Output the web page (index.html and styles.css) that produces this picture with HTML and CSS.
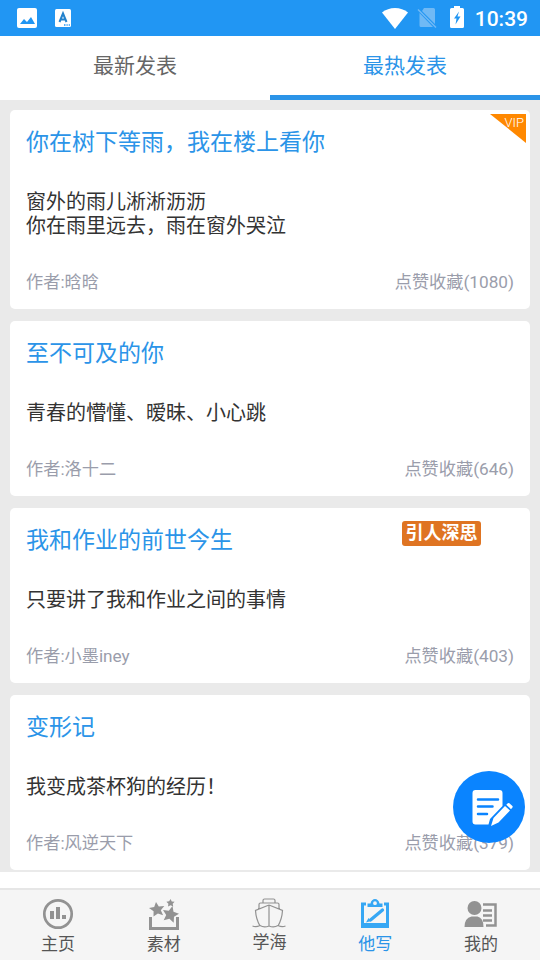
FILE: index.html
```
<!DOCTYPE html>
<html lang="zh-CN">
<head>
<meta charset="utf-8">
<title>最热发表</title>
<link rel="stylesheet" href="styles.css">
</head>
<body>
<header class="status">
  <div class="status-left">
    <svg width="20" height="20" viewBox="0 0 20 20"><rect width="20" height="20" rx="2" fill="#fff"/><path d="M3 16l4-5 3 3 4-5 4 7z" fill="#2196f3"/></svg>
    <svg width="16" height="18" viewBox="0 0 16 18"><rect width="16" height="18" rx="1.5" fill="#fff"/><path d="M4.5 13L8 4.5l3.500 8.500M5.700 10.500h4.600" fill="none" stroke="#2482cc" stroke-width="2"/><path d="M9 16h1.500m1 0h1.200m1 0h1.200" stroke="#2196f3" stroke-width="1.300"/></svg>
  </div>
  <div class="status-right">
    <svg class="wifi" width="26" height="21" viewBox="0 0 26 21"><path d="M0 4.500C7-1.500 19-1.500 26 4.500L13 21z" fill="#fff"/></svg>
    <svg class="sim" width="20" height="20" viewBox="0 0 20 20"><path d="M7 0h9.500a1.500 1.500 0 0 1 1.500 1.500V16L5 3zM2.500 5L16 19H4a1.500 1.500 0 0 1-1.500-1.500z" fill="#70b9f5"/><path d="M1 1.500L19 19.500" stroke="#70b9f5" stroke-width="1.500"/></svg>
    <svg class="battery" width="14" height="22" viewBox="0 0 14 22"><path d="M4 0h6v2h2.500a1.500 1.500 0 0 1 1.500 1.500v17a1.500 1.500 0 0 1-1.500 1.500h-11A1.500 1.500 0 0 1 0 20.500v-17A1.500 1.500 0 0 1 1.500 2H4z" fill="#fff"/><path d="M9 5.500L4 12.500h2.500L5.500 18.500 10.500 10.500H7.500z" fill="#2196f3"/></svg>
    <span class="clock">10:39</span>
  </div>
</header>
<nav class="tabs">
  <div class="tab">最新发表</div>
  <div class="tab tab-active">最热发表</div>
</nav>
<main class="feed">
  <article class="card">
    <svg class="vip" width="36" height="30" viewBox="0 0 36 30"><path d="M0 0h36v29z" fill="#ff8800"/><text x="14.500" y="13" class="vip-text">VIP</text></svg>
    <h2 class="title">你在树下等雨，我在楼上看你</h2>
    <p class="body">窗外的雨儿淅淅沥沥<br>你在雨里远去，雨在窗外哭泣</p>
    <div class="meta"><span>作者:晗晗</span><span>点赞收藏(1080)</span></div>
  </article>
  <article class="card">
    <h2 class="title">至不可及的你</h2>
    <p class="body">青春的懵懂、暧昧、小心跳</p>
    <div class="meta"><span>作者:洛十二</span><span>点赞收藏(646)</span></div>
  </article>
  <article class="card">
    <span class="tag">引人深思</span>
    <h2 class="title">我和作业的前世今生</h2>
    <p class="body">只要讲了我和作业之间的事情</p>
    <div class="meta"><span>作者:小墨iney</span><span>点赞收藏(403)</span></div>
  </article>
  <article class="card">
    <h2 class="title">变形记</h2>
    <p class="body">我变成茶杯狗的经历！</p>
    <div class="meta"><span>作者:风逆天下</span><span>点赞收藏(379)</span></div>
  </article>
</main>
<div class="fab">
  <svg width="72" height="72" viewBox="0 0 72 72"><path d="M22.500 19h24a3 3 0 0 1 3 3v13L37 48l-1.500 5.500h-13a3 3 0 0 1-3-3V22a3 3 0 0 1 3-3z" fill="#fff"/><path d="M25 28.500h20M25 35.500h14.500M25 43h9" stroke="#0a84ff" stroke-width="2.500" stroke-linecap="round"/><path d="M38 55l2.500-8L52 35l5 4.500L45.500 51.500zM53.300 33.700l1.500-1.500q.8-.6 1.600 0l3 2.800q.7.800 0 1.600L58 38.200z" fill="#fff"/></svg>
</div>
<footer class="nav">
  <div class="nav-item">
    <svg width="36" height="34" viewBox="0 0 36 34"><circle cx="18" cy="18" r="13.700" fill="none" stroke="#929292" stroke-width="2.700"/><path d="M10 15h4v8h-4zM16 11h4v12h-4zM22 19h4v4h-4z" fill="#929292"/></svg>
    <span>主页</span>
  </div>
  <div class="nav-item">
    <svg width="36" height="34" viewBox="0 0 36 34"><path d="M4.500 21v11.500h27V21" fill="none" stroke="#929292" stroke-width="3"/><path id="star" d="M10 6l2.800 4.600 5.500-.5-3.500 4.100 2.300 5.100-5.200-1.900-4.400 3.200.1-5.400L3 12l5.200-1.100z" fill="#929292"/><path d="M26.500 10l1 5.800 5.500 2-5 3-.3 5.900-4.300-4-5.700 1.500 2.500-5.300-3.200-4.900 5.800.7zM24.500 3l1.300 2.400 2.800.3-1.900 2 .5 2.800-2.600-1.200L22 10.500l.4-2.800-2-2 2.800-.4z" fill="#929292"/></svg>
    <span>素材</span>
  </div>
  <div class="nav-item nav-ship">
    <svg width="36" height="34" viewBox="0 0 36 34"><path d="M12 7V4.500q0-1.500 1.500-1.500h9q1.500 0 1.500 1.500V7M8 13V8.500Q8 7 9.500 7h17Q28 7 28 8.500V13M18 9L4.500 14.500Q5 23 9 30M18 9l13.500 5.500Q31 23 27 30M18 9v21M1.500 30q3.500 1.500 7.500-.5 4 2.500 9 .5 5 2 9-.5 4 2 7.500.5" fill="none" stroke="#929292" stroke-width="1.200"/></svg>
    <span>学海</span>
  </div>
  <div class="nav-item nav-active">
    <svg width="36" height="34" viewBox="0 0 36 34"><path d="M9 8H5.500v22.500h25V8H27" fill="none" stroke="#36a7f4" stroke-width="3"/><path d="M5 27h26v5H5z" fill="#36a7f4"/><path fill-rule="evenodd" d="M10.500 11V7.500h3C14 4.500 16 3 18 3s4 1.500 4.500 4.500h3V11zM18 5.300a1.900 1.900 0 1 0 0 3.800 1.900 1.900 0 0 0 0-3.800z" fill="#36a7f4"/><path d="M25.500 14L13.500 24" stroke="#36a7f4" stroke-width="3.300" stroke-linecap="round"/><path d="M11.500 22l-2.500 4.500 5-1.500z" fill="#36a7f4"/></svg>
    <span>他写</span>
  </div>
  <div class="nav-item">
    <svg width="36" height="34" viewBox="0 0 36 34"><circle cx="11.500" cy="12" r="7" fill="#929292"/><path d="M1.500 31q0-9 7-10.500h6q6 1.500 6 10.500z" fill="#929292"/><path d="M20 8.500h12.500v21H23M20 14.500h9M20 19.500h9M20 24.500h9" fill="none" stroke="#929292" stroke-width="2.500"/></svg>
    <span>我的</span>
  </div>
</footer>
</body>
</html>
```
FILE: styles.css
```
* { box-sizing: border-box; }
body {
  margin: 0;
  width: 540px;
  height: 960px;
  overflow: hidden;
  position: relative;
  display: flex;
  flex-direction: column;
  background: #fff;
  font-family: Roboto, "Noto Sans CJK SC", sans-serif;
}
svg { display: block; flex: none; }
.status {
  height: 36px;
  flex: none;
  padding: 0 12px 0 17px;
  display: flex;
  align-items: center;
  justify-content: space-between;
  background: #2196f3;
  color: #fff;
}
.status-left { display: flex; align-items: center; gap: 18px; }
.status-right { display: flex; align-items: center; }
.sim { margin-left: 9px; }
.battery { margin-left: 13px; margin-top: -2px; }
.clock {
  margin-left: 11px;
  font-size: 21px;
  font-weight: 500;
  line-height: 36px;
  padding-top: 2px;
}
.tabs { height: 64px; flex: none; display: flex; }
.tab {
  flex: 1;
  border-bottom: 5px solid transparent;
  text-align: center;
  font-size: 21px;
  line-height: 61px;
  color: #666;
}
.tab-active { color: #2b94e8; border-bottom-color: #2b94e8; }
.feed {
  height: 772px;
  flex: none;
  padding: 10px 10px 2px;
  display: flex;
  flex-direction: column;
  gap: 12px;
  background: #eaeaea;
}
.card {
  position: relative;
  padding: 16px 16px 15px;
  border-radius: 5px;
  background: #fff;
}
.title {
  margin: 0;
  font-size: 23px;
  font-weight: 400;
  line-height: 34px;
  color: #2b94e8;
}
.body {
  margin: 30px 0 33px;
  font-size: 20px;
  line-height: 24px;
  color: #333;
}
.meta {
  display: flex;
  justify-content: space-between;
  font-size: 17.2px;
  line-height: 23px;
  color: #9a9dab;
}
.vip { position: absolute; right: 4px; top: 4px; }
.vip-text { font: 300 13px Roboto, sans-serif; fill: #fff; }
.tag {
  position: absolute;
  left: 392px;
  top: 13px;
  width: 79px;
  height: 25px;
  border-radius: 3px;
  background: #df7422;
  color: #fff;
  font-size: 18px;
  font-weight: 700;
  line-height: 24px;
  text-align: center;
}
.fab {
  position: absolute;
  left: 453px;
  top: 771px;
  width: 72px;
  height: 72px;
  border-radius: 50%;
  background: #0a84ff;
}
.nav {
  height: 72px;
  flex: none;
  margin-top: 16px;
  padding: 6px 6px 0 5px;
  display: flex;
  border-top: 2px solid #e6e6e6;
  background: #f5f5f5;
  color: #555;
}
.nav-item {
  flex: 1;
  display: flex;
  flex-direction: column;
  align-items: center;
  font-size: 17px;
  line-height: 24px;
}
.nav-item span { margin-top: 2px; }
.nav-ship span { margin-top: 0; }
.nav-active { color: #2b94e8; }
```
